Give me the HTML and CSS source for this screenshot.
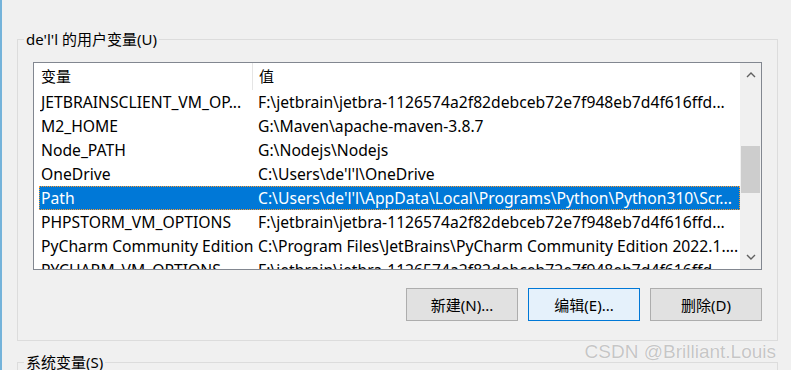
FILE: index.html
```html
<!DOCTYPE html>
<html lang="zh-CN">
<head>
    <meta charset="UTF-8">
    <title>环境变量</title>
    <link rel="stylesheet" href="styles.css">
</head>
<body>
    <fieldset class="group">
        <legend>de'l'l 的用户变量(U)</legend>
        <div class="listbox">
            <div class="list-body">
                <div class="list-head">
                    <div class="head-cell first">变量</div>
                    <div class="head-cell">值</div>
                </div>
                <div class="row"><div class="cell name">JETBRAINSCLIENT_VM_OP...</div><div class="cell">F:\jetbrain\jetbra-1126574a2f82debceb72e7f948eb7d4f616ffd...</div></div>
                <div class="row"><div class="cell name">M2_HOME</div><div class="cell">G:\Maven\apache-maven-3.8.7</div></div>
                <div class="row"><div class="cell name">Node_PATH</div><div class="cell">G:\Nodejs\Nodejs</div></div>
                <div class="row"><div class="cell name">OneDrive</div><div class="cell">C:\Users\de'l'l\OneDrive</div></div>
                <div class="row selected"><div class="cell name">Path</div><div class="cell">C:\Users\de'l'l\AppData\Local\Programs\Python\Python310\Scr...</div></div>
                <div class="row"><div class="cell name">PHPSTORM_VM_OPTIONS</div><div class="cell">F:\jetbrain\jetbra-1126574a2f82debceb72e7f948eb7d4f616ffd...</div></div>
                <div class="row"><div class="cell name">PyCharm Community Edition</div><div class="cell">C:\Program Files\JetBrains\PyCharm Community Edition 2022.1....</div></div>
                <div class="row"><div class="cell name">PYCHARM_VM_OPTIONS</div><div class="cell">F:\jetbrain\jetbra-1126574a2f82debceb72e7f948eb7d4f616ffd...</div></div>
            </div>
            <div class="scrollbar">
                <div class="arrow">
                    <svg width="10" height="6" viewBox="0 0 10 6"><polyline points="1,5 5,1 9,5" fill="none" stroke="#606060" stroke-width="1.4"/></svg>
                </div>
                <div class="track">
                    <div class="thumb"></div>
                </div>
                <div class="arrow">
                    <svg width="10" height="6" viewBox="0 0 10 6"><polyline points="1,1 5,5 9,1" fill="none" stroke="#606060" stroke-width="1.4"/></svg>
                </div>
            </div>
        </div>
        <div class="buttons">
            <button class="button">新建(N)...</button>
            <button class="button default">编辑(E)...</button>
            <button class="button">删除(D)</button>
        </div>
    </fieldset>

    <fieldset class="group system">
        <legend>系统变量(S)</legend>
    </fieldset>

    <div class="watermark">CSDN @Brilliant.Louis</div>
</body>
</html>
```

FILE: styles.css
```css
html {
    overflow: hidden;
}
body {
    margin: 0;
    height: 370px;
    overflow: hidden;
    background-color: #f0f0f0;
    border-left: 2px solid #74b3da;
    font-family: "Noto Sans", "Noto Sans CJK SC", sans-serif;
    font-size: 15px;
    color: #000;
    position: relative;
}
.group {
    box-sizing: border-box;
    width: 761px;
    min-width: 0;
    margin: 29px 0 0 15px;
    padding: 13px 15px 19px 15px;
    border: 1px solid #dcdcdc;
}
.group legend {
    margin-left: -9px;
    padding: 0 2px;
    line-height: 20px;
}
.system {
    margin-top: 11px;
    height: 40px;
}
.listbox {
    box-sizing: border-box;
    height: 208px;
    display: flex;
    background-color: white;
    border: 1px solid #828790;
}
.list-body {
    flex: 1;
    min-width: 0;
    overflow: hidden;
    padding-left: 5px;
}
.list-head {
    display: flex;
    height: 27px;
    line-height: 27px;
}
.head-cell {
    padding-left: 6px;
}
.head-cell.first {
    width: 211px;
    padding-left: 2px;
    border-right: 1px solid #e5e5e5;
}
.row {
    box-sizing: border-box;
    display: grid;
    grid-template-columns: 217px 1fr;
    height: 24px;
    line-height: 22px;
    font-size: 15.7px;
    border: 1px solid transparent;
}
.row.selected {
    background-color: #0078d7;
    color: white;
    border: 1px dotted #ff9a2e;
}
.cell {
    padding-left: 1px;
    white-space: nowrap;
    overflow: hidden;
}
.scrollbar {
    width: 21px;
    display: flex;
    flex-direction: column;
    background-color: #f0f0f0;
}
.arrow {
    height: 24px;
    display: flex;
    justify-content: center;
    align-items: center;
}
.track {
    flex: 1;
    padding-top: 59px;
}
.thumb {
    height: 47px;
    margin: 0 1px;
    background-color: #cdcdcd;
}
.buttons {
    display: flex;
    justify-content: flex-end;
    gap: 10px;
    margin-top: 18px;
}
.button {
    width: 112px;
    height: 33px;
    font-family: "Noto Sans", "Noto Sans CJK SC", sans-serif;
    font-size: 15px;
    color: #000;
    background-color: #e1e1e1;
    border: 1px solid #adadad;
    padding: 0;
}
.button.default {
    background-color: #e5f1fb;
    border-color: #0078d7;
}
.watermark {
    position: absolute;
    right: 15px;
    top: 341px;
    font-family: "Liberation Sans", sans-serif;
    font-size: 19px;
    color: #c6c6c6;
    text-shadow: 0 0 1px #fff, 0 0 1px #fff;
}
```
